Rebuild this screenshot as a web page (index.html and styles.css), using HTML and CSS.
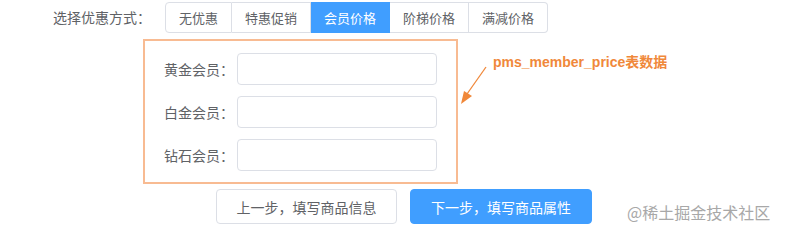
FILE: index.html
```html
<!DOCTYPE html>
<html>
<head>
<meta charset="utf-8">
<link rel="stylesheet" href="styles.css">
</head>
<body>
<div class="page">
  <div class="type-row">
    <span class="type-label">选择优惠方式：</span>
    <div class="radio-group">
      <span class="radio-btn">无优惠</span>
      <span class="radio-btn">特惠促销</span>
      <span class="radio-btn active">会员价格</span>
      <span class="radio-btn">阶梯价格</span>
      <span class="radio-btn">满减价格</span>
    </div>
  </div>
  <div class="member-box">
    <div class="field"><span class="field-label">黄金会员：</span><span class="input"></span></div>
    <div class="field"><span class="field-label">白金会员：</span><span class="input"></span></div>
    <div class="field"><span class="field-label">钻石会员：</span><span class="input"></span></div>
  </div>
  <div class="actions">
    <span class="btn btn-default">上一步，填写商品信息</span>
    <span class="btn btn-primary">下一步，填写商品属性</span>
  </div>
  <div class="note">pms_member_price表数据</div>
  <svg class="arrow" width="40" height="50" viewBox="0 0 40 50">
    <line x1="33" y1="6" x2="14" y2="33" stroke="#f0883a" stroke-width="1.3"/>
    <polygon points="8,43 11,30 19,35" fill="#f0883a"/>
  </svg>
  <div class="watermark">@稀土掘金技术社区</div>
</div>
</body>
</html>
```
FILE: styles.css
```css
html, body {
  margin: 0;
  padding: 0;
  background: #ffffff;
}
.page {
  position: relative;
  width: 786px;
  height: 236px;
  overflow: hidden;
  font-family: "Noto Sans CJK SC", "Liberation Sans", sans-serif;
  color: #606266;
}
.type-row {
  display: flex;
  align-items: center;
  padding-top: 2px;
  padding-left: 53px;
  height: 31px;
}
.type-label {
  font-size: 14px;
  width: 112px;
  line-height: 31px;
}
.radio-group {
  display: flex;
}
.radio-btn {
  display: flex;
  align-items: center;
  justify-content: center;
  height: 29px;
  padding: 0 13px;
  font-size: 13px;
  border: 1px solid #dcdfe6;
  border-left: none;
  color: #606266;
}
.radio-btn:first-child {
  border-left: 1px solid #dcdfe6;
  border-radius: 4px 0 0 4px;
}
.radio-btn:last-child {
  border-radius: 0 4px 4px 0;
}
.radio-btn.active {
  background: #409eff;
  border-color: #409eff;
  color: #ffffff;
}
.member-box {
  box-sizing: border-box;
  margin-top: 6px;
  margin-left: 143px;
  width: 315px;
  height: 145px;
  border: 2px solid #f8bb92;
  padding: 12px 0 0 19px;
  display: flex;
  flex-direction: column;
  gap: 11px;
}
.field {
  display: flex;
  align-items: center;
  height: 32px;
}
.field-label {
  width: 73px;
  font-size: 14px;
  color: #606266;
}
.input {
  box-sizing: border-box;
  width: 200px;
  height: 32px;
  border: 1px solid #dcdfe6;
  border-radius: 4px;
}
.actions {
  display: flex;
  gap: 13px;
  margin-top: 5px;
  margin-left: 216px;
}
.btn {
  box-sizing: border-box;
  display: flex;
  align-items: center;
  justify-content: center;
  height: 35px;
  width: 181px;
  font-size: 14px;
  border-radius: 4px;
  border: 1px solid #dcdfe6;
}
.btn-default {
  color: #606266;
  background: #ffffff;
}
.btn-primary {
  background: #409eff;
  border-color: #409eff;
  color: #ffffff;
  width: 182px;
}
.note {
  position: absolute;
  left: 493px;
  top: 53px;
  font-family: "Liberation Sans", "Noto Sans CJK SC", sans-serif;
  font-weight: bold;
  font-size: 14px;
  color: #f0883a;
  line-height: 18px;
}
.arrow {
  position: absolute;
  left: 453px;
  top: 61px;
}
.watermark {
  position: absolute;
  left: 627px;
  top: 202px;
  font-size: 16px;
  color: #a8a8a8;
  line-height: 20px;
}
```
